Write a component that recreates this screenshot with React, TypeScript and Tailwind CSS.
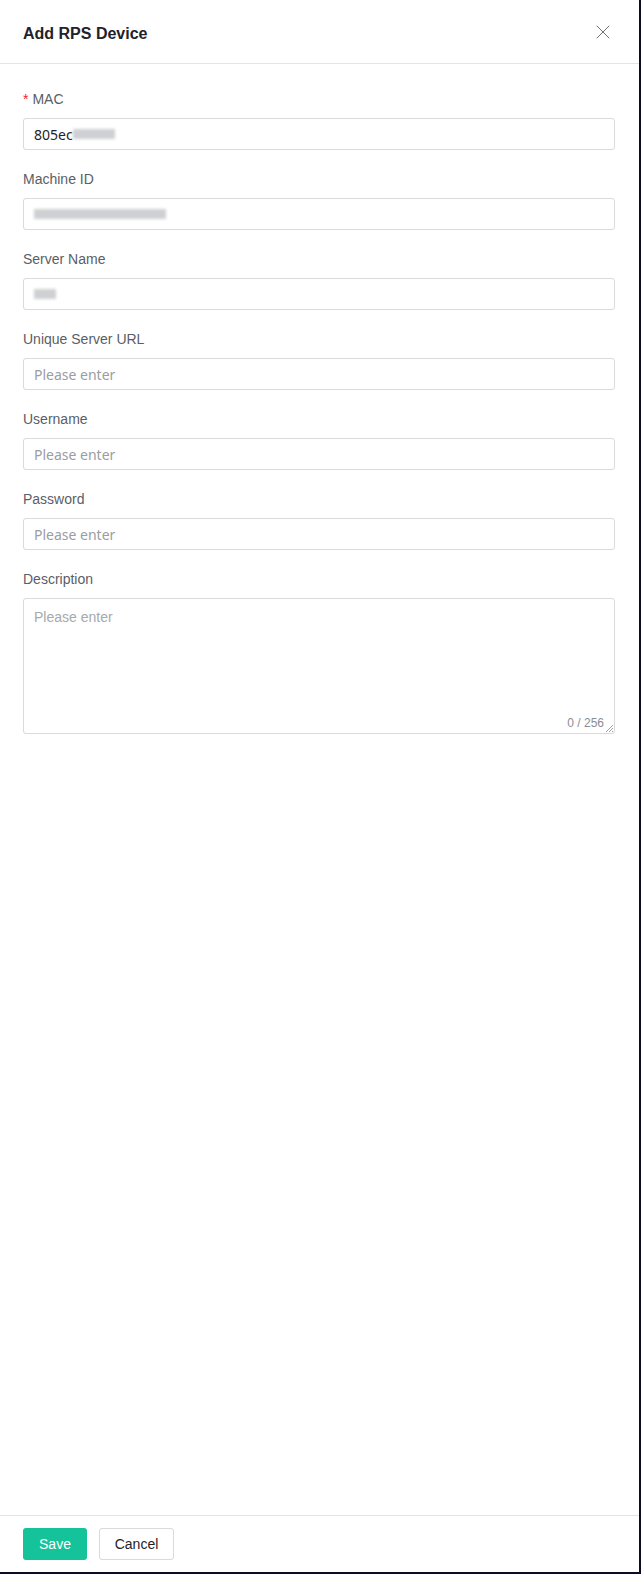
import { X } from "lucide-react";

const sans = "font-['Liberation_Sans',Arial,sans-serif]";
const noto = "font-['Noto_Sans',sans-serif]";

function Field({
  label,
  required,
  children,
}: {
  label: string;
  required?: boolean;
  children: React.ReactNode;
}) {
  return (
    <div className="mb-[18px]">
      <div className={`${sans} text-[14px] leading-[22px] pb-2 text-[#5a5e66]`}>
        {required && <span className="text-[#f5222d] mr-1">*</span>}
        {label}
      </div>
      {children}
    </div>
  );
}

function Input({ children }: { children?: React.ReactNode }) {
  return (
    <div
      className={`${noto} h-8 w-full rounded-[3px] border border-[#d9d9de] px-[10px] flex items-center text-[14px] text-[#9a9da3]`}
    >
      {children ?? "Please enter"}
    </div>
  );
}

function Blur({ w }: { w: number }) {
  return (
    <span
      className="inline-block h-[10px] bg-[#cfd0d3] blur-[1.5px]"
      style={{ width: w }}
    />
  );
}

export default function App() {
  return (
    <div className="w-[641px] h-[1574px] bg-white border-r-2 border-b-2 border-[#0c0b24] flex flex-col">
      <div className="h-16 shrink-0 border-b border-[#e4e4e7] flex items-center justify-between pl-[23px] pr-[24px]">
        <h1 className={`${sans} mt-1 text-[16px] font-bold text-[#1f2329]`}>Add RPS Device</h1>
        <X size={24} strokeWidth={1} className="text-[#6b6f76]" />
      </div>

      <div className="flex-1 pt-[24px] pl-[23px] pr-[24px]">
        <Field label="MAC" required>
          <Input>
            <span className="text-[#1f2329]">805ec</span>
            <Blur w={42} />
          </Input>
        </Field>
        <Field label="Machine ID">
          <Input>
            <Blur w={132} />
          </Input>
        </Field>
        <Field label="Server Name">
          <Input>
            <Blur w={22} />
          </Input>
        </Field>
        <Field label="Unique Server URL">
          <Input />
        </Field>
        <Field label="Username">
          <Input />
        </Field>
        <Field label="Password">
          <Input />
        </Field>
        <Field label="Description">
          <div className="relative h-[136px] w-full rounded-[3px] border border-[#d9d9de] px-[10px] py-[5px]">
            <span className={`${sans} text-[14px] leading-[22px] text-[#a6a9ae]`}>Please enter</span>
            <span className={`${sans} absolute right-[10px] bottom-[1px] text-[12px] text-[#8a8d93]`}>
              0 / 256
            </span>
            <svg className="absolute right-[1px] bottom-[1px]" width="8" height="8" viewBox="0 0 8 8">
              <path d="M8 1L1 8M8 4L4 8M8 7L7 8" stroke="#8a8d93" strokeWidth="0.8" />
            </svg>
          </div>
        </Field>
      </div>

      <div className="h-[57px] shrink-0 border-t border-[#e4e4e7] flex items-center gap-3 pl-[23px]">
        <button className={`${sans} h-8 w-[64px] rounded-[3px] bg-[#14c39a] text-white text-[14px]`}>
          Save
        </button>
        <button
          className={`${sans} h-8 w-[75px] rounded-[3px] border border-[#d9d9de] bg-white text-[#1f2329] text-[14px]`}
        >
          Cancel
        </button>
      </div>
    </div>
  );
}
